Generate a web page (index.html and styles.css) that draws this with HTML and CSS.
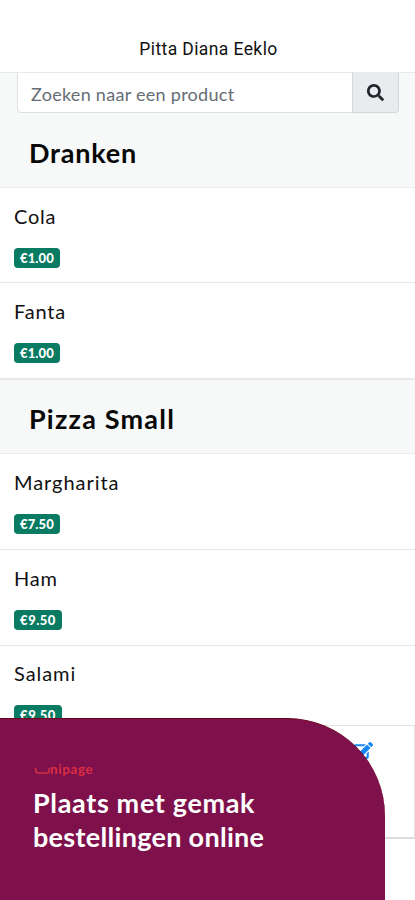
FILE: index.html
```html
<!DOCTYPE html>
<html lang="nl">
<head>
<meta charset="utf-8">
<meta name="viewport" content="width=device-width, initial-scale=1">
<title>Pitta Diana Eeklo</title>
<link rel="stylesheet" href="styles.css">
</head>
<body>
<div class="screen">
  <header class="topbar"><span class="topbar-title">Pitta Diana Eeklo</span></header>
  <main>
    <section class="group">
      <div class="search">
        <div class="search-field"><span>Zoeken naar een product</span></div>
        <div class="search-button">
          <svg viewBox="0 0 512 512" width="17" height="17" fill="#20252b"><path d="M505 442.700 405.300 343c-4.500-4.500-10.600-7-17-7H372c27.600-35.300 44-79.700 44-128C416 93.100 322.900 0 208 0S0 93.100 0 208s93.100 208 208 208c48.300 0 92.700-16.400 128-44v16.300c0 6.400 2.500 12.500 7 17l99.700 99.700c9.400 9.400 24.600 9.400 33.900 0l28.300-28.300c9.400-9.400 9.400-24.600.1-34zM208 336c-70.700 0-128-57.200-128-128 0-70.700 57.200-128 128-128 70.700 0 128 57.200 128 128 0 70.700-57.200 128-128 128z"/></svg>
        </div>
      </div>
      <h2 class="group-title">Dranken</h2>
      <div class="item"><span class="name">Cola</span><span class="price">€1.00</span></div>
      <div class="item"><span class="name">Fanta</span><span class="price">€1.00</span></div>
    </section>
    <section class="group">
      <h2 class="group-title small">Pizza Small</h2>
      <div class="item tall"><span class="name wide">Margharita</span><span class="price">€7.50</span></div>
      <div class="item tall"><span class="name">Ham</span><span class="price p-9">€9.50</span></div>
      <div class="item cut"><span class="name wide">Salami</span><span class="price p-9">€9.50</span></div>
    </section>
    <div class="note">
      <svg viewBox="0 0 576 512" width="19" height="17" fill="#1686f5"><path d="M402.600 83.200l90.200 90.200c3.800 3.800 3.800 10 0 13.800L274.400 405.600l-92.800 10.300c-12.400 1.400-22.900-9.100-21.500-21.500l10.300-92.800L388.800 83.200c3.800-3.800 10-3.800 13.800 0zm162-22.900l-48.800-48.800c-15.200-15.200-39.900-15.200-55.200 0l-35.400 35.400c-3.800 3.800-3.800 10 0 13.800l90.200 90.200c3.800 3.800 10 3.800 13.800 0l35.400-35.400c15.200-15.300 15.200-40 0-55.200zM384 346.200V448H64V128h229.800c3.200 0 6.200-1.300 8.500-3.500l40-40c7.600-7.600 2.200-20.500-8.500-20.500H48C21.500 64 0 85.500 0 112v352c0 26.500 21.500 48 48 48h352c26.500 0 48-21.500 48-48V306.200c0-10.700-12.900-16-20.500-8.500l-40 40c-2.200 2.300-3.500 5.300-3.500 8.500z"/></svg>
    </div>
  </main>
  <aside class="promo">
    <div class="brand">
      <svg width="15" height="8" viewBox="0 0 15 8" fill="none" stroke="#d92e45" stroke-width="1.500"><path d="M.8 1v2.700q0 2.300 2.300 2.300h8.800q2.300 0 2.300-2.300V1"/></svg><span>nipage</span>
    </div>
    <p class="l1">Plaats met gemak</p>
    <p class="l2">bestellingen online</p>
  </aside>
</div>
</body>
</html>
```
FILE: styles.css
```css
* { box-sizing: border-box; margin: 0; padding: 0; }
body { background: #fff; }
.screen {
  position: relative;
  width: 415px;
  height: 900px;
  overflow: hidden;
  font-family: Lato, "Liberation Sans", sans-serif;
  color: #111;
}
svg { display: block; }
.topbar {
  height: 73px;
  padding: 38px 0 0 2px;
  border-bottom: 1px solid #e8eaea;
  text-align: center;
  line-height: 22px;
}
.topbar-title { font-family: Roboto, sans-serif; font-size: 17.500px; letter-spacing: .4px; }
.group { background: #f7f9f9; }
.search { display: flex; height: 40px; margin: 0 16px 0 17px; }
.search-field {
  flex: 1;
  padding-left: 13px;
  border: 1px solid #dde1e4;
  border-top: 0;
  border-right: 0;
  border-radius: 0 0 0 4px;
  background: #fff;
  color: #666d74;
  font-size: 18px;
  line-height: 42px;
  letter-spacing: .28px;
}
.search-button {
  width: 47px;
  padding: 11px 0 0 14px;
  border: 1px solid #d3d8dd;
  border-top: 0;
  border-radius: 0 0 4px 0;
  background: #e9ecef;
}
.group-title {
  height: 75px;
  padding-left: 29px;
  border-bottom: 1px solid #eceeee;
  color: #080808;
  font-size: 27px;
  font-weight: 700;
  line-height: 80px;
  letter-spacing: .8px;
}
.group-title.small { height: 74px; line-height: 78px; letter-spacing: 1.200px; }
.item {
  display: flex;
  flex-direction: column;
  align-items: flex-start;
  height: 95px;
  padding: 15px 14px 0;
  border-bottom: 1px solid #e7e8e9;
  background: #fff;
}
.item:last-child { height: 97px; border-bottom: 2px solid #e7e9e9; }
.item.tall { height: 96px; }
.item.cut { height: 79px; padding-top: 14px; border: 0; overflow: hidden; }
.name { font-size: 20px; line-height: 26px; letter-spacing: .8px; }
.name.wide { letter-spacing: .95px; }
.price {
  flex: none;
  width: 46px;
  height: 20px;
  margin-top: 19px;
  border-radius: 4px;
  background: #087b62;
  color: #fff;
  font-size: 13px;
  font-weight: 900;
  line-height: 21px;
  letter-spacing: .15px;
  text-align: center;
}
.p-9 { width: 48px; letter-spacing: .5px; }
.note {
  height: 114px;
  padding: 16px 0 0 353px;
  border: 1px solid #e2e2e2;
  border-bottom: 2px solid #dcdcdc;
}
.promo {
  position: absolute;
  left: 0;
  bottom: 0;
  width: 385px;
  height: 182px;
  padding: 41px 33px 0;
  border-top: 1px solid #6c0519;
  border-radius: 0 98px 0 0;
  background: #7e104b;
  color: #fff;
}
.brand { display: flex; align-items: center; height: 17px; margin-left: 2px; color: #d92e45; font-size: 13.500px; font-weight: 700; line-height: 16px; letter-spacing: .6px; }
.brand svg { margin-top: 5px; }
.promo p { font-size: 27px; font-weight: 700; line-height: 34px; white-space: nowrap; }
.promo .l1 { margin-top: 9px; letter-spacing: .65px; }
.promo .l2 { letter-spacing: .3px; }
```
